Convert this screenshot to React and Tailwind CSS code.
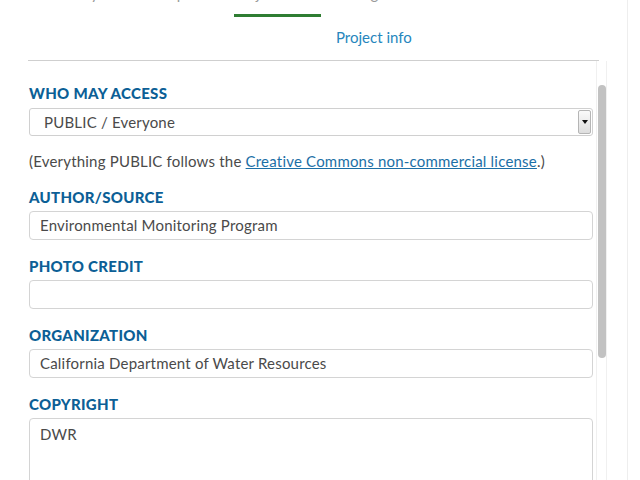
import React from "react";

const tabs = [
  { label: "Activity", w: "w-[90px]" },
  { label: "Description", w: "w-[110px]" },
  { label: "Project info", w: "w-[87px]" },
  { label: "Categories", w: "w-[120px]" },
  { label: "Location", w: "w-[110px]" },
];

function Label({ children, className = "" }) {
  return (
    <div className={`text-[15px] leading-[18px] font-black tracking-[0.3px] text-[#0c5f96] ${className}`}>
      {children}
    </div>
  );
}

function TextBox({ value }) {
  return (
    <div className="h-[29px] mt-[5px] rounded-[4px] border border-[#d4d4d4] bg-white pl-[10px] flex items-center text-[15px] tracking-[0.2px] text-[#4a4a4a]">
      {value}
    </div>
  );
}

export default function App() {
  return (
    <div className="w-[640px] h-[480px] overflow-hidden bg-white font-['Lato',sans-serif] flex">
      <div className="w-[628px] shrink-0 border-r border-[#eeeeee]">
        {/* Tabs, scrolled mostly out of view */}
        <div className="flex pl-[28px] -mt-[16px] h-[30px] text-[15px] leading-[18px] text-[#9a9a9a]">
          {tabs.map((t) => (
            <div key={t.label} className={`${t.w} text-center`}>
              {t.label}
            </div>
          ))}
        </div>
        <div className="ml-[234px] w-[87px] h-[3px] bg-[#2f7d32]" />

        <div className="pl-[336px] mt-[11px] text-[15px] leading-[18px] text-[#2686bd]">
          Project info
        </div>
        <div className="mx-[28px] mt-[14px] h-px bg-[#cfcfcf]" />

        <div className="flex">
          {/* Form */}
          <div className="ml-[29px] w-[564px] shrink-0 pt-[23px]">
            <Label>WHO MAY ACCESS</Label>
            <div className="h-[28px] mt-[6px] rounded-[3px] border border-[#d0d0d0] bg-white flex items-center justify-between pl-[14px] pr-[1px] text-[15px] tracking-[0.2px] text-[#4a4a4a]">
              <span>PUBLIC / Everyone</span>
              <div className="w-[13px] h-[24px] rounded-[2px] border border-[#b5b5b5] bg-gradient-to-b from-[#fafafa] to-[#dedede] flex items-center justify-center">
                <div className="w-0 h-0 border-l-[3px] border-r-[3px] border-t-[4px] border-l-transparent border-r-transparent border-t-[#111]" />
              </div>
            </div>
            <p className="mt-[16px] text-[15px] leading-[18px] tracking-[0.2px] text-[#4a4a4a] whitespace-nowrap">
              (Everything PUBLIC follows the{" "}
              <a className="text-[#1c6fa6] underline">Creative Commons non-commercial license</a>
              .)
            </p>

            <Label className="mt-[18px]">AUTHOR/SOURCE</Label>
            <TextBox value="Environmental Monitoring Program" />

            <Label className="mt-[17px]">PHOTO CREDIT</Label>
            <TextBox value="" />

            <Label className="mt-[17px]">ORGANIZATION</Label>
            <TextBox value="California Department of Water Resources" />

            <Label className="mt-[17px]">COPYRIGHT</Label>
            <div className="h-[100px] mt-[5px] rounded-[4px] border border-[#d4d4d4] bg-white pl-[10px] pt-[6px] text-[15px] leading-[18px] tracking-[0.2px] text-[#4a4a4a]">
              DWR
            </div>
          </div>

          {/* Scrollbar */}
          <div className="ml-[3px] w-[11px] h-[420px] border-l border-r border-[#f0f0f0] pt-[24px] flex justify-center">
            <div className="w-[8px] h-[273px] rounded-full bg-[#c2c2c2]" />
          </div>
        </div>
      </div>
    </div>
  );
}
